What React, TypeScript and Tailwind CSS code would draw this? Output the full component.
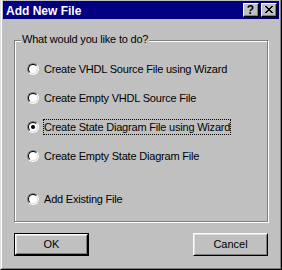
// AddNewFileDialog — Win98-style "Add New File" dialog

const font = { fontFamily: '"Liberation Sans", Arial, sans-serif' }

const options = [
  { label: 'Create VHDL Source File using Wizard' },
  { label: 'Create Empty VHDL Source File' },
  { label: 'Create State Diagram File using Wizard', checked: true },
  { label: 'Create Empty State Diagram File' },
]

function Radio({ checked = false }: { checked?: boolean }) {
  return (
    <div className="w-[12px] h-[12px] rounded-full border border-t-[#808080] border-l-[#808080] border-r-white border-b-white shrink-0">
      <div className="w-full h-full rounded-full border border-t-[#000] border-l-[#000] border-r-[#dfdfdf] border-b-[#dfdfdf] bg-white flex items-center justify-center">
        {checked && <div className="w-[4px] h-[4px] rounded-full bg-black" />}
      </div>
    </div>
  )
}

function Option({ label, checked, focused }: { label: string; checked?: boolean; focused?: boolean }) {
  return (
    <div className="flex items-center h-[16px]">
      <Radio checked={checked} />
      <span
        className={`ml-[4px] px-[1px] h-[16px] flex items-center text-[11px] tracking-[-0.2px] text-black leading-none ${
          focused ? 'outline outline-1 outline-dotted outline-black -outline-offset-1' : ''
        }`}
      >
        {label}
      </span>
    </div>
  )
}

function Button({ children, isDefault = false }: { children: string; isDefault?: boolean }) {
  const inner = (
    <div className="w-full h-full border border-t-white border-l-white border-r-black border-b-black">
      <div className="w-full h-full border border-t-[#dfdfdf] border-l-[#dfdfdf] border-r-[#808080] border-b-[#808080] flex items-center justify-center text-[11px] text-black">
        {children}
      </div>
    </div>
  )
  return (
    <div className={`w-[75px] h-[23px] bg-[#c0c0c0] ${isDefault ? 'border border-black' : ''}`}>{inner}</div>
  )
}

export default function App() {
  return (
    <div style={font} className="w-[282px] h-[270px] bg-[#c0c0c0] border-l border-r border-b border-l-[#dfdfdf] border-r-black border-b-black">
      <div className="h-full border-l border-r border-b border-l-white border-r-[#808080] border-b-[#808080] pt-[1px] px-[1px] flex flex-col">
        {/* Title bar */}
        <div className="h-[18px] bg-[#000080] flex items-center pl-[3px] pr-[2px]">
          <span className="text-white font-bold text-[12px] leading-none flex-1 pt-[1px]">Add New File</span>
          <div className="flex gap-[2px]">
            <div className="w-[16px] h-[14px] bg-[#c0c0c0] border border-t-white border-l-white border-r-black border-b-black">
              <div className="w-full h-full border-r border-b border-[#808080] flex items-center justify-center text-[12px] font-bold leading-none text-black">
                ?
              </div>
            </div>
            <div className="w-[16px] h-[14px] bg-[#c0c0c0] border border-t-white border-l-white border-r-black border-b-black">
              <div className="w-full h-full border-r border-b border-[#808080] flex items-center justify-center">
                <svg width="8" height="7" viewBox="0 0 8 7" shapeRendering="crispEdges">
                  <path d="M0 0h2v1h-2zM6 0h2v1h-2zM1 1h2v1h-2zM5 1h2v1h-2zM2 2h4v1h-4zM3 3h2v1h-2zM2 4h4v1h-4zM1 5h2v1h-2zM5 5h2v1h-2zM0 6h2v1h-2zM6 6h2v1h-2z" fill="#000" />
                </svg>
              </div>
            </div>
          </div>
        </div>

        {/* Body */}
        <div className="flex-1 px-[11px] pt-[21px]">
          <div className="relative w-[254px] h-[182px] border border-[#808080] shadow-[inset_1px_1px_0_#fff,1px_1px_0_#fff]">
            <span className="absolute left-[6px] top-[-10px] px-[1px] bg-[#c0c0c0] text-[11px] tracking-[-0.2px] text-black">
              What would you like to do?
            </span>
            <div className="flex flex-col pl-[12px] pt-[20px]">
              <div className="flex flex-col gap-[13px]">
                {options.map((o) => (
                  <Option key={o.label} label={o.label} checked={o.checked} focused={o.checked} />
                ))}
              </div>
              <div className="mt-[27px]">
                <Option label="Add Existing File" />
              </div>
            </div>
          </div>

          <div className="w-[254px] mt-[11px] flex justify-between">
            <Button isDefault>OK</Button>
            <Button>Cancel</Button>
          </div>
        </div>
      </div>
    </div>
  )
}
